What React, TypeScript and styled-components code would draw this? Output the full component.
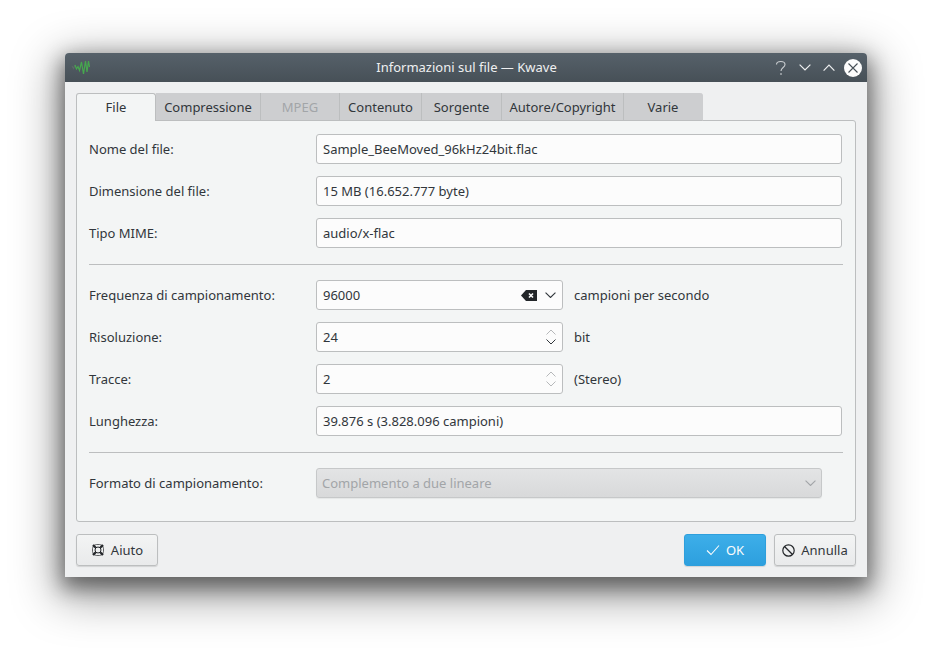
import React from 'react';
import styled, {createGlobalStyle} from 'styled-components';

const GlobalStyle = createGlobalStyle`
  html, body {
    margin: 0;
    padding: 0;
    background: #fff;
    overflow: hidden;
  }
  body {
    font-family: "Noto Sans", "Liberation Sans", sans-serif;
    font-size: 13px;
    color: #31363b;
  }
`;

const Desktop = styled.div`
  width: 932px;
  height: 654px;
  padding: 53px 65px 77px;
  box-sizing: border-box;
  background: #fff;
`;

const Window = styled.div`
  width: 802px;
  height: 524px;
  display: flex;
  flex-direction: column;
  background: #eff0f1;
  border-radius: 4px 4px 0 0;
  box-shadow: 0 13px 46px 8px rgba(0, 0, 0, 0.38), 0 8px 20px 3px rgba(0, 0, 0, 0.44);
`;

const TitleBar = styled.div`
  height: 29px;
  flex: none;
  display: flex;
  align-items: center;
  padding: 0 5px 0 6px;
  background: linear-gradient(#56616a, #475057);
  border-radius: 4px 4px 0 0;
  color: #eff0f1;
`;

const AppIcon = styled.svg`
  width: 20px;
  height: 20px;
  flex: none;
`;

const WindowTitle = styled.div`
  flex: 1;
  text-align: center;
  margin-left: 70px;
  padding-bottom: 1px;
`;

const TitleButtons = styled.div`
  display: flex;
  align-items: center;
  gap: 6px;
`;

const TitleButton = styled.div`
  width: 18px;
  height: 18px;
  display: flex;
  align-items: center;
  justify-content: center;
`;

const Body = styled.div`
  flex: 1;
  display: flex;
  flex-direction: column;
  padding: 11px;
`;

const TabBar = styled.div`
  display: flex;
  height: 28px;
  flex: none;
  position: relative;
  z-index: 1;
  margin-bottom: -1px;
`;

const Tab = styled.div<{$width: number; $active?: boolean; $disabled?: boolean; $last?: boolean}>`
  width: ${p => p.$width}px;
  box-sizing: border-box;
  display: flex;
  align-items: center;
  justify-content: center;
  padding-bottom: ${p => (p.$active ? 2 : 0)}px;
  background: ${p => (p.$active ? '#f3f5f5' : '#cdced0')};
  color: ${p => (p.$disabled ? '#a2a5a8' : '#31363b')};
  border: 1px solid #bcbebf;
  border-width: ${p => (p.$active ? '1px 1px 0 1px' : '0 1px 1px 0')};
  border-color: ${p => (p.$last ? '#cdced0 #cdced0 #bcbebf #cdced0' : '#bcbebf')};
  border-radius: ${p => (p.$active ? '3px 3px 0 0' : p.$last ? '0 3px 0 0' : '0')};
`;

const Pane = styled.div`
  height: 402px;
  box-sizing: border-box;
  flex: none;
  display: flex;
  flex-direction: column;
  padding: 13px 12px 0 12px;
  background: #f3f5f5;
  border: 1px solid #bcbebf;
  border-radius: 0 3px 3px 3px;
`;

const Row = styled.div`
  display: flex;
  align-items: center;
  height: 30px;
  margin-bottom: 12px;
`;

const Label = styled.div`
  width: 227px;
  flex: none;
`;

const Field = styled.div<{$width?: number}>`
  ${p => (p.$width ? `width: ${p.$width}px; flex: none;` : 'flex: 1;')}
  height: 30px;
  box-sizing: border-box;
  display: flex;
  align-items: center;
  padding: 0 6px;
  background: #fcfcfc;
  border: 1px solid #bcbebf;
  border-radius: 3px;
  margin-right: 1px;
`;

const FieldText = styled.span`
  flex: 1;
`;

const Suffix = styled.span`
  margin-left: 10px;
`;

const Separator = styled.div`
  height: 1px;
  background: #bcbebf;
  margin: 4px 0 15px;
`;

const DisabledCombo = styled.div`
  width: 506px;
  height: 30px;
  box-sizing: border-box;
  display: flex;
  align-items: center;
  padding: 0 5px;
  background: linear-gradient(#e3e4e5, #d8d9da);
  border: 1px solid #c6c8c9;
  border-radius: 3px;
  color: #a2a5a8;
  box-shadow: 0 1px 1px rgba(0, 0, 0, 0.06);
`;

const Footer = styled.div`
  display: flex;
  align-items: center;
  margin-top: 12px;
  height: 32px;
`;

const Spacer = styled.div`
  flex: 1;
`;

const Button = styled.div<{$width: number; $primary?: boolean}>`
  width: ${p => p.$width}px;
  height: 32px;
  box-sizing: border-box;
  display: flex;
  align-items: center;
  justify-content: center;
  gap: 6px;
  margin-left: 8px;
  border-radius: 3px;
  border: 1px solid ${p => (p.$primary ? '#2e9fdc' : '#bcbebf')};
  background: ${p => (p.$primary ? 'linear-gradient(#3daee9, #2d9fde)' : 'linear-gradient(#f3f4f4, #e9eaeb)')};
  color: ${p => (p.$primary ? '#fcfcfc' : '#31363b')};
  box-shadow: 0 1px 1px rgba(0, 0, 0, 0.12);
  &:first-child {
    margin-left: 0;
  }
`;

const Chevron = ({up, color = '#31363b', size = 11}: {up?: boolean; color?: string; size?: number}) => (
  <svg width={size} height={size * 0.6} viewBox="0 0 10 6" fill="none">
    <path d={up ? 'M0.5 5.5 L5 1 L9.5 5.5' : 'M0.5 0.5 L5 5 L9.5 0.5'} stroke={color} strokeWidth="1" />
  </svg>
);

const StepperBox = styled.div`
  display: flex;
  flex-direction: column;
  align-items: center;
  gap: 4px;
`;

const Stepper = ({disabled}: {disabled?: boolean}) => (
  <StepperBox>
    <Chevron up size={10} color="#b6b8ba" />
    <Chevron size={10} color={disabled ? '#b6b8ba' : '#31363b'} />
  </StepperBox>
);

const ClearIcon = () => (
  <svg width="16" height="11" viewBox="0 0 16 11" style={{marginRight: 8}}>
    <path d="M0 5.5 L5 0 H16 V11 H5 Z" fill="#232629" />
    <path d="M8 3.5 L12 7.5 M12 3.5 L8 7.5" stroke="#fcfcfc" strokeWidth="1.6" />
  </svg>
);

const tabs = [
  {label: 'File', width: 80, active: true},
  {label: 'Compressione', width: 105},
  {label: 'MPEG', width: 79, disabled: true},
  {label: 'Contenuto', width: 82},
  {label: 'Sorgente', width: 80},
  {label: 'Autore/Copyright', width: 122},
  {label: 'Varie', width: 79, last: true},
];

export default function App() {
  return (
    <Desktop>
      <GlobalStyle />
      <Window>
        <TitleBar>
          <AppIcon viewBox="0 0 20 20" fill="none">
            <path d="M1 8 L2.5 10.5 L4 7" stroke="#5c6a66" strokeWidth="1.1" />
            <path d="M4 7 L5.5 11 L7 8.5 L8.5 12.5 L10.5 4 L12.5 16 L14.5 3 L16 14 L17.5 3 L18.5 9" stroke="#46a84e" strokeWidth="1.2" />
          </AppIcon>
          <WindowTitle>Informazioni sul file — Kwave</WindowTitle>
          <TitleButtons>
            <TitleButton>
              <svg width="12" height="16" viewBox="0 0 12 16" fill="none" stroke="#c9cdd0" strokeWidth="1.1">
                <path d="M1.5 4.5 C1.5 0.5 10 0.5 10 4.5 C10 7.5 6 7.5 6 11" />
                <path d="M6 13 V15" />
              </svg>
            </TitleButton>
            <TitleButton>
              <Chevron color="#eff0f1" size={12} />
            </TitleButton>
            <TitleButton>
              <Chevron up color="#eff0f1" size={12} />
            </TitleButton>
            <TitleButton>
              <svg width="18" height="18" viewBox="0 0 18 18">
                <circle cx="9" cy="9" r="9" fill="#fcfcfc" />
                <path d="M4.5 4.5 L13.5 13.5 M13.5 4.5 L4.5 13.5" stroke="#475057" strokeWidth="1.1" />
              </svg>
            </TitleButton>
          </TitleButtons>
        </TitleBar>
        <Body>
          <TabBar>
            {tabs.map(t => (
              <Tab key={t.label} $width={t.width} $active={t.active} $disabled={t.disabled} $last={t.last}>
                {t.label}
              </Tab>
            ))}
          </TabBar>
          <Pane>
            <Row>
              <Label>Nome del file:</Label>
              <Field><FieldText>Sample_BeeMoved_96kHz24bit.flac</FieldText></Field>
            </Row>
            <Row>
              <Label>Dimensione del file:</Label>
              <Field><FieldText>15 MB (16.652.777 byte)</FieldText></Field>
            </Row>
            <Row>
              <Label>Tipo MIME:</Label>
              <Field><FieldText>audio/x-flac</FieldText></Field>
            </Row>
            <Separator />
            <Row>
              <Label>Frequenza di campionamento:</Label>
              <Field $width={247}>
                <FieldText>96000</FieldText>
                <ClearIcon />
                <Chevron />
              </Field>
              <Suffix>campioni per secondo</Suffix>
            </Row>
            <Row>
              <Label>Risoluzione:</Label>
              <Field $width={247}>
                <FieldText>24</FieldText>
                <Stepper />
              </Field>
              <Suffix>bit</Suffix>
            </Row>
            <Row>
              <Label>Tracce:</Label>
              <Field $width={247}>
                <FieldText>2</FieldText>
                <Stepper disabled />
              </Field>
              <Suffix>(Stereo)</Suffix>
            </Row>
            <Row>
              <Label>Lunghezza:</Label>
              <Field><FieldText>39.876 s (3.828.096 campioni)</FieldText></Field>
            </Row>
            <Separator />
            <Row>
              <Label>Formato di campionamento:</Label>
              <DisabledCombo>
                <FieldText>Complemento a due lineare</FieldText>
                <Chevron color="#a2a5a8" />
              </DisabledCombo>
            </Row>
          </Pane>
          <Footer>
            <Button $width={82}>
              <svg width="14" height="14" viewBox="0 0 14 14" fill="none" stroke="#232629">
                <rect x="1.5" y="1.5" width="11" height="11" rx="4" strokeWidth="1" opacity="0.7" />
                <circle cx="7" cy="7" r="3" strokeWidth="1" />
                <path d="M2 2 L4.8 4.8 M12 2 L9.2 4.8 M2 12 L4.8 9.2 M12 12 L9.2 9.2" strokeWidth="2.2" />
              </svg>
              Aiuto
            </Button>
            <Spacer />
            <Button $width={82} $primary>
              <svg width="14" height="12" viewBox="0 0 14 12" fill="none" stroke="#fcfcfc" strokeWidth="1.1">
                <path d="M1 6.5 L5 10.5 L13 1.5" />
              </svg>
              OK
            </Button>
            <Button $width={82}>
              <svg width="13" height="13" viewBox="0 0 13 13" fill="none" stroke="#232629" strokeWidth="1.2">
                <circle cx="6.5" cy="6.5" r="5.7" />
                <path d="M2.5 2.5 L10.5 10.5" />
              </svg>
              Annulla
            </Button>
          </Footer>
        </Body>
      </Window>
    </Desktop>
  );
}
